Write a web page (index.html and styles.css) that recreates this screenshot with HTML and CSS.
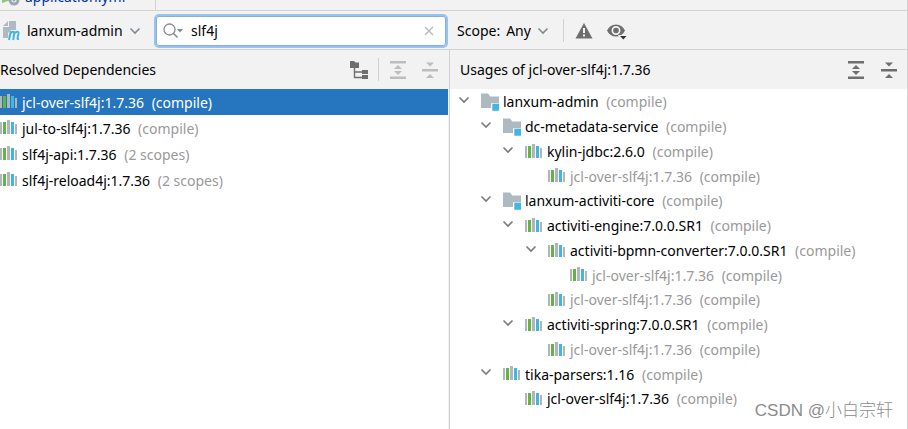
FILE: index.html
```html
<!DOCTYPE html>
<html lang="en">
<head>
    <meta charset="UTF-8">
    <meta name="viewport" content="width=device-width, initial-scale=1.0">
    <title>Dependency Analyzer</title>
    <link rel="stylesheet" href="styles.css">
</head>
<body>

    <!-- Shared icons -->
    <svg class="sprite" aria-hidden="true">
        <symbol id="lib" viewBox="0 0 18 18">
            <path fill="#afb6bc" d="M0 3h2v12H0zM7 1h3v14H7zM15 5h2v10H15z"/>
            <path fill="#62b543" d="M3 3h3v12H3z"/>
            <path fill="#40b6e0" d="M11 3h3v12h-3z"/>
        </symbol>
        <symbol id="module" viewBox="0 0 18 18">
            <path fill="#afb9c1" d="M0 .5h7l2.300 3H18v6.700h-8V15H0z"/>
            <path fill="#40b6e0" d="M11.300 10.800h7v7h-7z"/>
        </symbol>
        <symbol id="chevron" viewBox="0 0 12 12">
            <path fill="none" stroke="currentColor" stroke-width="1.600" d="M1.500 3.500L6 8l4.500-4.500"/>
        </symbol>
        <symbol id="expand" viewBox="0 0 18 18">
            <path fill="currentColor" d="M1 0h16v2.500H1zM1 15.500h16V18H1zM9 4l4 4H5zM9 14l4-4H5z"/>
        </symbol>
        <symbol id="collapse" viewBox="0 0 18 18">
            <path fill="currentColor" d="M1 8h16v2.400H1zM5 1.500h8l-4 4zM5 17h8l-4-4z"/>
        </symbol>
    </svg>

    <div class="tabs">
        <a class="tab" href="#">
            <svg width="18" height="18" viewBox="0 0 18 18">
                <path fill="#62b543" d="M0 15V6l5-3 4 3v6z" opacity=".7"/>
                <circle cx="12" cy="12" r="4" fill="none" stroke="#9aa7b0" stroke-width="3"/>
                <circle cx="12" cy="12" r="1.500" fill="#9aa7b0"/>
            </svg>
            <span>application.yml</span>
        </a>
    </div>

    <div class="toolbar">
        <div class="combo project">
            <svg width="18" height="20" viewBox="0 0 18 20">
                <path fill="#afb9c1" d="M6 0h7v9H8l-3 3v5H0V6h6z"/>
                <path fill="#afb9c1" d="M5 0v5H0z"/>
                <path fill="none" stroke="#40b6e0" stroke-width="2" d="M6 19l1.800-9M7.200 13c1-2.500 4.500-3.500 4 -.5L10.300 19M11.200 13c1-2.500 4.700-3.500 4.300-.5l-1 4.500c-.2 1 .3 1.200 1.500 1"/>
            </svg>
            <select aria-label="Project">
                <option>lanxum-admin</option>
            </select>
            <svg class="arrow" width="12" height="12"><use href="#chevron"/></svg>
        </div>
        <div class="search">
            <svg width="20" height="16" viewBox="0 0 20 16">
                <circle cx="6.500" cy="6.500" r="5.500" fill="none" stroke="#7f8b91" stroke-width="1.300"/>
                <path stroke="#7f8b91" stroke-width="1.600" d="M10.500 10.500l4 4"/>
                <path fill="#7f8b91" d="M14 6h6l-3 3.500z"/>
            </svg>
            <input type="text" value="slf4j" aria-label="Search dependencies">
            <button class="clear" aria-label="Clear">
                <svg width="10" height="10" viewBox="0 0 10 10"><path stroke="#b3bcc2" stroke-width="1.300" d="M1 1l8 8M9 1L1 9"/></svg>
            </button>
        </div>
        <div class="combo scope">
            <label for="scope">Scope:</label>
            <select id="scope">
                <option>Any</option>
            </select>
            <svg class="arrow" width="12" height="12"><use href="#chevron"/></svg>
        </div>
        <span class="divider"></span>
        <button class="conflicts" aria-label="Show conflicts only">
            <svg width="18" height="16" viewBox="0 0 18 16">
                <path fill="#6e6e6e" d="M9 0l8.500 15.500H.5z"/>
                <path fill="#f2f2f2" d="M8 5h2v5H8zM8 11.500h2v2H8z"/>
            </svg>
        </button>
        <button aria-label="View options">
            <svg width="20" height="18" viewBox="0 0 20 18">
                <path fill="#6e6e6e" fill-rule="evenodd" d="M0 8.500C2 4.500 5 2.500 9 2.500s7 2 9 6c-2 4-5 6-9 6s-7-2-9-6zM9 4a4.500 4.500 0 1 0 0 9 4.500 4.500 0 0 0 0-9z"/>
                <circle cx="9" cy="8.500" r="2.800" fill="#6e6e6e"/>
                <path fill="#f2f2f2" d="M11 13h9v5h-6z"/>
                <path fill="#333" d="M13 14h6.500l-3.200 3.500z"/>
            </svg>
        </button>
    </div>

    <div class="content">
        <section class="panel resolved">
            <header>
                <h2>Resolved Dependencies</h2>
                <button aria-label="Show as tree">
                    <svg width="18" height="18" viewBox="0 0 18 18">
                        <path fill="#6e6e6e" d="M0 0h4l1.500 1.500H9V7H0zM12 9h6v4h-6zM12 14h6v4h-6z"/>
                        <path fill="none" stroke="#6e6e6e" stroke-width="1.400" d="M4.500 7v9.500H12M4.500 11H12"/>
                    </svg>
                </button>
                <span class="divider"></span>
                <button disabled aria-label="Expand all"><svg width="18" height="18"><use href="#expand"/></svg></button>
                <button disabled aria-label="Collapse all"><svg width="18" height="18"><use href="#collapse"/></svg></button>
            </header>
            <ul class="list">
                <li class="selected"><svg class="icon"><use href="#lib"/></svg>jcl-over-slf4j:1.7.36 <span>(compile)</span></li>
                <li><svg class="icon"><use href="#lib"/></svg>jul-to-slf4j:1.7.36 <span>(compile)</span></li>
                <li><svg class="icon"><use href="#lib"/></svg>slf4j-api:1.7.36 <span>(2 scopes)</span></li>
                <li><svg class="icon"><use href="#lib"/></svg>slf4j-reload4j:1.7.36 <span>(2 scopes)</span></li>
            </ul>
        </section>

        <section class="panel usages">
            <header>
                <h2>Usages of jcl-over-slf4j:1.7.36</h2>
                <button aria-label="Expand all"><svg width="18" height="18"><use href="#expand"/></svg></button>
                <button aria-label="Collapse all"><svg width="18" height="18"><use href="#collapse"/></svg></button>
            </header>
            <ul class="tree">
                <li><svg class="arrow"><use href="#chevron"/></svg><svg class="icon"><use href="#module"/></svg>lanxum-admin <span>(compile)</span></li>
                <li class="level1"><svg class="arrow"><use href="#chevron"/></svg><svg class="icon"><use href="#module"/></svg>dc-metadata-service <span>(compile)</span></li>
                <li class="level2"><svg class="arrow"><use href="#chevron"/></svg><svg class="icon"><use href="#lib"/></svg>kylin-jdbc:2.6.0 <span>(compile)</span></li>
                <li class="level3 leaf omitted"><svg class="icon"><use href="#lib"/></svg>jcl-over-slf4j:1.7.36 <span>(compile)</span></li>
                <li class="level1"><svg class="arrow"><use href="#chevron"/></svg><svg class="icon"><use href="#module"/></svg>lanxum-activiti-core <span>(compile)</span></li>
                <li class="level2"><svg class="arrow"><use href="#chevron"/></svg><svg class="icon"><use href="#lib"/></svg>activiti-engine:7.0.0.SR1 <span>(compile)</span></li>
                <li class="level3"><svg class="arrow"><use href="#chevron"/></svg><svg class="icon"><use href="#lib"/></svg>activiti-bpmn-converter:7.0.0.SR1 <span>(compile)</span></li>
                <li class="level4 leaf omitted"><svg class="icon"><use href="#lib"/></svg>jcl-over-slf4j:1.7.36 <span>(compile)</span></li>
                <li class="level3 leaf omitted"><svg class="icon"><use href="#lib"/></svg>jcl-over-slf4j:1.7.36 <span>(compile)</span></li>
                <li class="level2"><svg class="arrow"><use href="#chevron"/></svg><svg class="icon"><use href="#lib"/></svg>activiti-spring:7.0.0.SR1 <span>(compile)</span></li>
                <li class="level3 leaf omitted"><svg class="icon"><use href="#lib"/></svg>jcl-over-slf4j:1.7.36 <span>(compile)</span></li>
                <li class="level1"><svg class="arrow"><use href="#chevron"/></svg><svg class="icon"><use href="#lib"/></svg>tika-parsers:1.16 <span>(compile)</span></li>
                <li class="level2 leaf"><svg class="icon"><use href="#lib"/></svg>jcl-over-slf4j:1.7.36 <span>(compile)</span></li>
            </ul>
        </section>
    </div>

    <div class="watermark">CSDN @小白宗轩</div>

</body>
</html>
```
FILE: styles.css
```css
* {
    box-sizing: border-box;
}

body {
    display: flex;
    flex-direction: column;
    min-height: 100vh;
    margin: 0;
    border-right: 1px solid #d1d1d1;
    background-color: #f2f2f2;
    color: #000;
    font-family: "Noto Sans", "Noto Sans CJK SC", sans-serif;
    font-size: 14px;
    position: relative;
}

svg {
    display: block;
    flex: none;
}

button {
    display: flex;
    padding: 0;
    border: none;
    background: none;
    color: #6e6e6e;
}

button:disabled {
    color: #bdbdbd;
}

ul {
    list-style: none;
    margin: 0;
    padding: 0;
}

.sprite {
    position: absolute;
    width: 0;
    height: 0;
}

/* Only the bottom edge of the editor tabs is visible */
.tabs {
    display: flex;
    height: 11px;
    border-bottom: 1px solid #d1d1d1;
    overflow: hidden;
}

.tab {
    display: flex;
    align-items: flex-end;
    gap: 5px;
    width: 156px;
    padding: 0 0 4px 2px;
    border-right: 1px solid #d1d1d1;
    color: #0032a0;
    line-height: 18px;
    text-decoration: none;
}

.toolbar {
    display: flex;
    align-items: center;
    height: 39px;
    padding-top: 1px;
    border-bottom: 1px solid #d1d1d1;
}

.combo {
    display: flex;
    align-items: center;
    gap: 6px;
    color: #000;
}

.combo select {
    appearance: none;
    padding: 0;
    border: none;
    background: none;
    color: inherit;
    font: inherit;
}

.project {
    width: 154px;
    padding-left: 3px;
}

.arrow {
    width: 12px;
    height: 12px;
    color: #7f8b91;
}

.search {
    display: flex;
    align-items: center;
    width: 294px;
    height: 34px;
    margin-right: 9px;
    padding: 0 12px 0 7px;
    border: 2px solid #97c3f3;
    border-radius: 5px;
    box-shadow: inset 0 0 0 1px #87afda;
    background-color: #fff;
}

.search input {
    flex: 1;
    min-width: 0;
    margin-left: 8px;
    padding: 0;
    border: none;
    outline: none;
    background: none;
    font: inherit;
}

.divider {
    width: 1px;
    height: 23px;
    background-color: #d1d1d1;
}

.toolbar > .divider {
    margin: 0 11px 0 14px;
}

.conflicts {
    margin-right: 14px;
}

.content {
    display: flex;
    flex: 1;
}

.panel {
    display: flex;
    flex-direction: column;
    flex: 1;
    min-width: 0;
}

.panel header {
    display: flex;
    align-items: center;
    height: 39px;
}

.panel h2 {
    flex: 1;
    margin: 0;
    font-size: 14px;
    font-weight: normal;
}

.resolved {
    flex: 0 0 450px;
    padding-right: 1px;
    border-right: 1px solid #d1d1d1;
}

.resolved header {
    gap: 10px;
    padding-right: 9px;
}

.resolved header button:last-child {
    margin-left: 4px;
}

.usages header {
    gap: 15px;
    padding: 0 9px 0 10px;
}

.list,
.tree {
    flex: 1;
    background-color: #fff;
}

.list li,
.tree li {
    display: flex;
    align-items: center;
    white-space: pre;
}

.list li {
    height: 26px;
}

.list span,
.tree span {
    margin-left: 4px;
}

.list span,
.tree span,
.omitted {
    color: #999;
}

.list .selected,
.list .selected span {
    background-color: #2675bf;
    color: #fff;
}

.icon {
    width: 18px;
    height: 18px;
    margin-right: 4px;
}

.tree li {
    height: 25px;
    padding-left: 8px;
}

/* rows average a bit under 25px */
.tree li:nth-child(4n) {
    height: 24px;
}

.tree .arrow {
    margin: 0 11px 4px 0;
    color: #7a7a7a;
}

.tree .level1 {
    padding-left: 30px;
}

.tree .level2 {
    padding-left: 52px;
}

.tree .level3 {
    padding-left: 75px;
}

.tree .level4 {
    padding-left: 97px;
}

/* keeps leaf icons in line with rows that have an arrow */
.tree .leaf::before {
    content: "";
    width: 23px;
}

.watermark {
    position: absolute;
    right: 14px;
    bottom: 6px;
    color: #8c8c8c;
    font-family: "Liberation Sans", "Noto Sans CJK SC", sans-serif;
    font-size: 17px;
    font-weight: 300;
    line-height: 24px;
}
```
